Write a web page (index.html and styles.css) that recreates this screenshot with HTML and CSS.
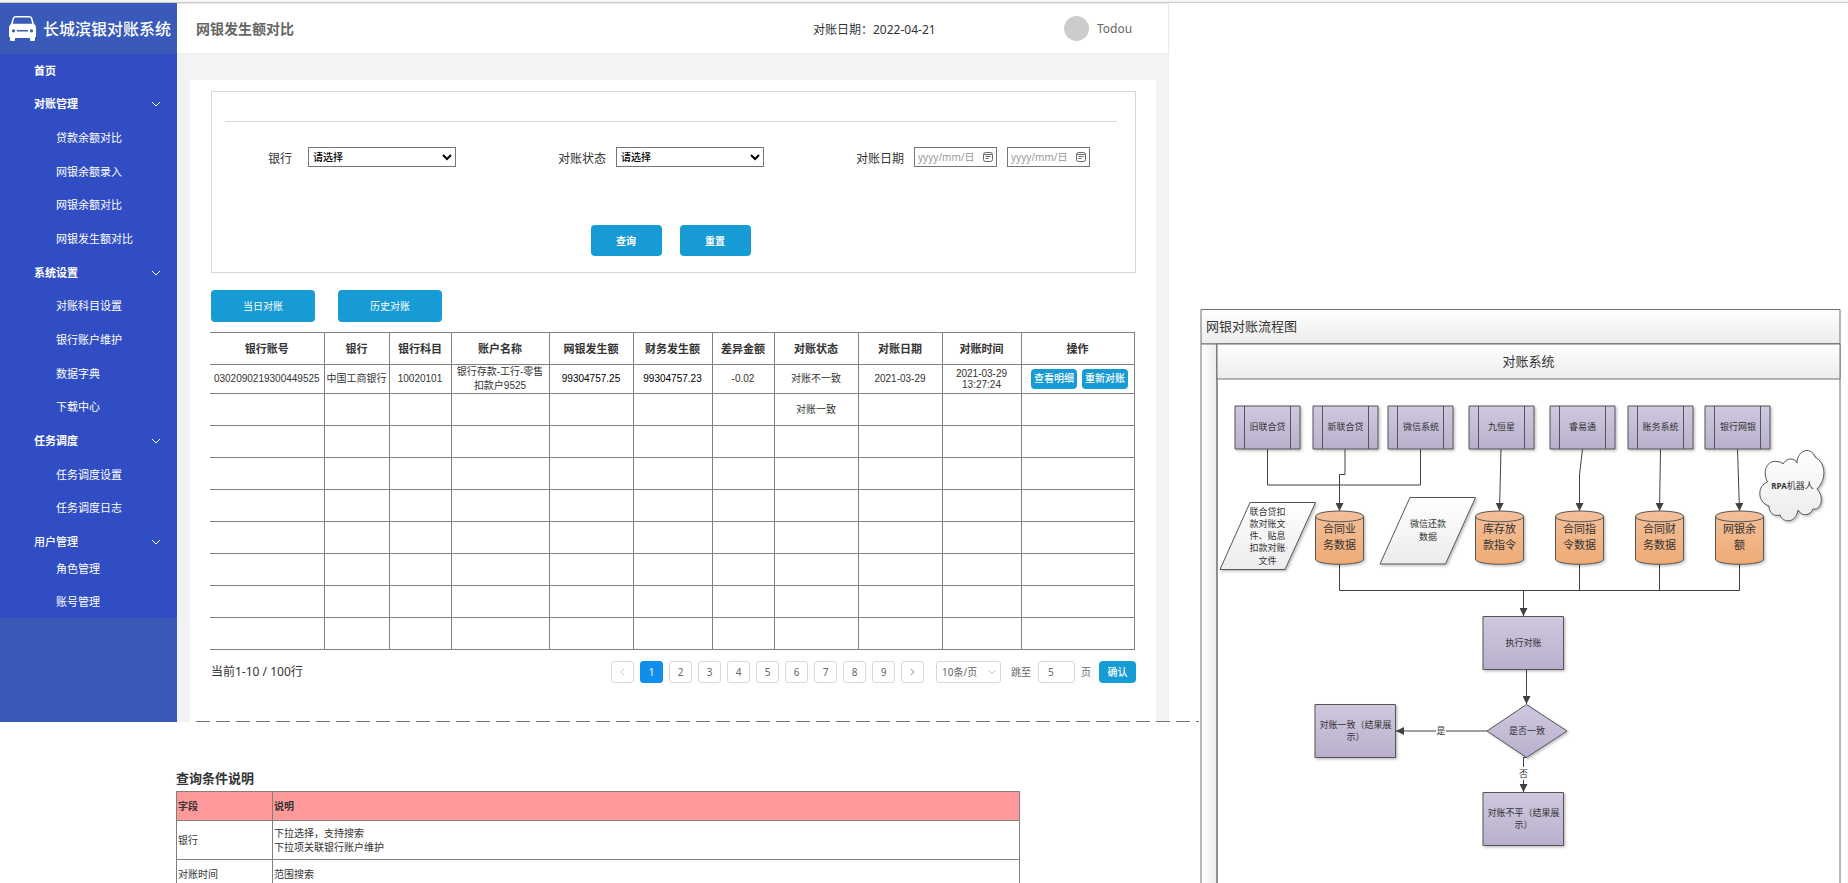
FILE: index.html
```html
<!DOCTYPE html>
<html lang="zh-CN">
<head>
<meta charset="utf-8">
<title>网银发生额对比</title>
<link rel="stylesheet" href="styles.css">
</head>
<body>
<div class="topline"></div>
<div class="page">
  <div class="left">
    <div class="app">
      <aside class="sidebar">
        <div class="brand">
          <svg class="car" viewBox="0 0 27 25" aria-hidden="true">
            <path fill="#fff" fill-rule="evenodd" d="M7 0H20C22 0 23 1 23.6 3L25 8C26.3 9 27 10 27 12V21H26V24Q26 25 25 25H22Q21 25 21 24V22H6V24Q6 25 5 25H2Q1 25 1 24V21H0V12C0 10 .7 9 2 8L3.400 3C4 1 5 0 7 0ZM7 1.500C5.800 1.500 5.200 2.200 4.900 3.200L3.800 7.800H23.200L22.100 3.200C21.800 2.200 21.200 1.500 20 1.500ZM4.500 13.200A1.600 1.600 0 1 0 4.500 16.400A1.600 1.600 0 1 0 4.500 13.200ZM22.500 13.200A1.600 1.600 0 1 0 22.500 16.400A1.600 1.600 0 1 0 22.500 13.200ZM8 14H19V15.500H8Z"/>
          </svg>
          <span>长城滨银对账系统</span>
        </div>
        <nav class="menu">
          <ul class="menu-main">
            <li class="top"><a href="#">首页</a></li>
            <li class="top"><a href="#">对账管理</a><svg class="chev" viewBox="0 0 10 6"><path d="M1 1l4 4 4-4"/></svg></li>
            <li><a href="#">贷款余额对比</a></li>
            <li><a href="#">网银余额录入</a></li>
            <li><a href="#">网银余额对比</a></li>
            <li><a href="#">网银发生额对比</a></li>
            <li class="top"><a href="#">系统设置</a><svg class="chev" viewBox="0 0 10 6"><path d="M1 1l4 4 4-4"/></svg></li>
            <li><a href="#">对账科目设置</a></li>
            <li><a href="#">银行账户维护</a></li>
            <li><a href="#">数据字典</a></li>
            <li><a href="#">下载中心</a></li>
            <li class="top"><a href="#">任务调度</a><svg class="chev" viewBox="0 0 10 6"><path d="M1 1l4 4 4-4"/></svg></li>
            <li><a href="#">任务调度设置</a></li>
            <li><a href="#">任务调度日志</a></li>
            <li class="top medium"><a href="#">用户管理</a><svg class="chev" viewBox="0 0 10 6"><path d="M1 1l4 4 4-4"/></svg></li>
          </ul>
          <ul class="menu-user">
            <li><a href="#">角色管理</a></li>
            <li><a href="#">账号管理</a></li>
          </ul>
        </nav>
      </aside>
      <main class="main">
        <header class="header">
          <h1>网银发生额对比</h1>
          <span class="today">对账日期：2022-04-21</span>
          <span class="user"><i class="avatar"></i>Todou</span>
        </header>
        <section class="panel">
          <form class="filter">
            <hr>
            <div class="fields">
              <div class="field wide"><label for="bank">银行</label><select id="bank"><option>请选择</option></select></div>
              <div class="field"><label for="state">对账状态</label><select id="state"><option>请选择</option></select></div>
              <div class="field"><label for="from">对账日期</label>
                <span class="date"><input id="from" type="text" placeholder="yyyy/mm/日"><svg viewBox="0 0 10 10"><rect x=".5" y=".5" width="9" height="9" rx="2"/><path d="M1 2.500h8M2.500 4.500h5M2.500 6.500h3"/></svg></span>
                <span class="date"><input aria-label="结束日期" type="text" placeholder="yyyy/mm/日"><svg viewBox="0 0 10 10"><rect x=".5" y=".5" width="9" height="9" rx="2"/><path d="M1 2.500h8M2.500 4.500h5M2.500 6.500h3"/></svg></span>
              </div>
            </div>
            <div class="submit">
              <button class="btn heavy" type="button">查询</button>
              <button class="btn heavy" type="button">重置</button>
            </div>
          </form>
          <div class="modes">
            <button class="btn" type="button">当日对账</button>
            <button class="btn" type="button">历史对账</button>
          </div>
          <div class="grid-wrap">
          <table class="grid">
            <colgroup><col class="c114"><col class="c65"><col class="c62"><col class="c98"><col class="c84"><col class="c79"><col class="c62"><col class="c84"><col class="c84"><col class="c79"><col class="c113"></colgroup>
            <thead><tr><th>银行账号</th><th>银行</th><th>银行科目</th><th>账户名称</th><th>网银发生额</th><th>财务发生额</th><th>差异金额</th><th>对账状态</th><th>对账日期</th><th>对账时间</th><th>操作</th></tr></thead>
            <tbody>
              <tr class="first"><td>0302090219300449525</td><td>中国工商银行</td><td>10020101</td><td>银行存款-工行-零售<br>扣款户9525</td><td class="dark">99304757.25</td><td class="dark">99304757.23</td><td>-0.02</td><td>对账不一致</td><td>2021-03-29</td><td class="time">2021-03-29<br>13:27:24</td><td><div class="ops"><button type="button">查看明细</button><button type="button">重新对账</button></div></td></tr>
              <tr><td></td><td></td><td></td><td></td><td></td><td></td><td></td><td>对账一致</td><td></td><td></td><td></td></tr>
              <tr><td></td><td></td><td></td><td></td><td></td><td></td><td></td><td></td><td></td><td></td><td></td></tr>
              <tr><td></td><td></td><td></td><td></td><td></td><td></td><td></td><td></td><td></td><td></td><td></td></tr>
              <tr><td></td><td></td><td></td><td></td><td></td><td></td><td></td><td></td><td></td><td></td><td></td></tr>
              <tr><td></td><td></td><td></td><td></td><td></td><td></td><td></td><td></td><td></td><td></td><td></td></tr>
              <tr><td></td><td></td><td></td><td></td><td></td><td></td><td></td><td></td><td></td><td></td><td></td></tr>
              <tr><td></td><td></td><td></td><td></td><td></td><td></td><td></td><td></td><td></td><td></td><td></td></tr>
              <tr><td></td><td></td><td></td><td></td><td></td><td></td><td></td><td></td><td></td><td></td><td></td></tr>
            </tbody>
          </table>
          </div>
          <div class="pager">
            <span class="count">当前1-10 / 100行</span>
            <div class="pages">
              <button type="button" aria-label="上一页" disabled><svg viewBox="0 0 5 8"><path d="M4 1L1 4l3 3"/></svg></button>
              <button type="button" class="on">1</button>
              <button type="button">2</button>
              <button type="button">3</button>
              <button type="button">4</button>
              <button type="button">5</button>
              <button type="button">6</button>
              <button type="button">7</button>
              <button type="button">8</button>
              <button type="button">9</button>
              <button type="button" aria-label="下一页"><svg viewBox="0 0 5 8"><path d="M1 1l3 3-3 3"/></svg></button>
            </div>
            <span class="size"><select aria-label="每页条数"><option>10条/页</option></select><svg viewBox="0 0 10 6"><path d="M1 1l4 4 4-4"/></svg></span>
            <label for="jump">跳至</label>
            <input id="jump" type="text" value="5">
            <span class="unit">页</span>
            <button class="btn confirm" type="button">确认</button>
          </div>
        </section>
      </main>
      <svg class="fold" height="1" aria-hidden="true"><line x1="0" y1=".5" x2="100%" y2=".5"/></svg>
    </div>
    <section class="notes">
      <h2>查询条件说明</h2>
      <table>
        <thead><tr><th class="name">字段</th><th>说明</th></tr></thead>
        <tbody>
          <tr class="tall"><td>银行</td><td>下拉选择，支持搜索<br>下拉项关联银行账户维护</td></tr>
          <tr><td>对账时间</td><td>范围搜索</td></tr>
        </tbody>
      </table>
    </section>
  </div>
  <div class="right">
    <svg class="flow" viewBox="0 0 658 583" role="img" aria-label="网银对账流程图">
      <defs>
        <linearGradient id="gh" x2="0" y2="1"><stop offset="0" stop-color="#fff"/><stop offset="1" stop-color="#ececec"/></linearGradient>
        <linearGradient id="gv"><stop offset="0" stop-color="#fff"/><stop offset="1" stop-color="#ececec"/></linearGradient>
        <linearGradient id="gp" x2="0" y2="1"><stop offset="0" stop-color="#cfc8de"/><stop offset="1" stop-color="#bab0cd"/></linearGradient>
        <linearGradient id="go" x2="0" y2="1"><stop offset="0" stop-color="#f3c09a"/><stop offset="1" stop-color="#efab75"/></linearGradient>
        <filter id="sh" x="-10%" y="-10%" width="130%" height="130%"><feDropShadow dx="1.500" dy="1.500" stdDeviation="1" flood-opacity=".25"/></filter>
        <marker id="ar" markerUnits="userSpaceOnUse" markerWidth="8" markerHeight="8" refX="8" refY="4" orient="auto"><path d="M0 0L8 4L0 8Z" fill="#404040"/></marker>
        <g id="proc"><path class="purple" filter="url(#sh)" d="M0 0H65V43H0Z"/><path class="edge" d="M9.500 0V43M55.500 0V43"/></g>
        <g id="cyl"><path class="orange" filter="url(#sh)" d="M-24 5.500C-24 -1.800 24 -1.800 24 5.500V48C24 55 -24 55 -24 48Z"/><path class="edge" d="M-24 5.500C-24 12.500 24 12.500 24 5.500"/></g>
      </defs>
      <path class="frame" fill="url(#gh)" d="M11 10.500H650V45H11Z"/>
      <path class="frame" fill="url(#gv)" d="M11 45H27V600H11Z"/>
      <path class="frame" fill="none" d="M27 45H650V600H27Z"/>
      <path class="frame" fill="url(#gh)" d="M27 45H650V80H27Z"/>
      <text class="t13 start" x="16" y="32">网银对账流程图</text>
      <text class="t13" x="338.500" y="67">对账系统</text>

      <path class="link" d="M77.500 150V186H230.500V150"/>
      <g class="link arrow">
        <path d="M155 150V175.500H149.500V212"/><path d="M311 150L309.500 212"/><path d="M392.500 150L389.500 176V212"/><path d="M470.500 150L469.500 212"/><path d="M547.500 150L549.500 212"/>
        <path d="M333.500 291.500V317"/><path d="M336.500 371V405"/><path d="M297 432H206"/><path d="M336.500 458.500H333.500V493"/>
      </g>
      <path class="link" d="M149.500 265V291.500H549.500V265M389.500 265V291.500M469.500 265V291.500"/>

      <use href="#proc" x="45" y="107"/><use href="#proc" x="123" y="107"/><use href="#proc" x="198" y="107"/><use href="#proc" x="279" y="107"/><use href="#proc" x="360" y="107"/><use href="#proc" x="438" y="107"/><use href="#proc" x="515" y="107"/>
      <g class="t9"><text x="77.500" y="131">旧联合贷</text><text x="155.500" y="131">新联合贷</text><text x="231" y="131">微信系统</text><text x="311.500" y="131">九恒星</text><text x="392.500" y="131">睿易通</text><text x="470.500" y="131">账务系统</text><text x="548" y="131">银行网银</text></g>

      <path class="paper" filter="url(#sh)" d="M60 203.500H125.500L95 270.500H30Z"/>
      <path class="paper" filter="url(#sh)" d="M220 198.500H285.500L255.500 265H190Z"/>
      <g class="t9"><text x="77.500" y="216">联合贷扣</text><text x="77.500" y="228">款对账文</text><text x="77.500" y="240">件、贴息</text><text x="77.500" y="252">扣款对账</text><text x="77.500" y="265">文件</text><text x="238" y="228">微信还款</text><text x="238" y="241">数据</text></g>

      <use href="#cyl" x="149.500" y="212"/><use href="#cyl" x="309.500" y="212"/><use href="#cyl" x="389.500" y="212"/><use href="#cyl" x="469.500" y="212"/><use href="#cyl" x="549.500" y="212"/>
      <g class="t11"><text x="149.500" y="234">合同业</text><text x="149.500" y="250">务数据</text><text x="309.500" y="234">库存放</text><text x="309.500" y="250">款指令</text><text x="389.500" y="234">合同指</text><text x="389.500" y="250">令数据</text><text x="469.500" y="234">合同财</text><text x="469.500" y="250">务数据</text><text x="549.500" y="234">网银余</text><text x="549.500" y="250">额</text></g>

      <path class="paper" filter="url(#sh)" d="M577.500 183C572 172 577 161 587 162.500Q591 162.500 593 165C597 158 605 159 607 164C607 152 620 146 625 158C636 164 637 180 627 190C635 198 631 212 623 210C620 217 612 218 608 211C606 225 592 224 590 216C583 218 579 213 579 207C567 203 567 187 577.500 183Z"/>
      <text class="t9" x="602.500" y="190"><tspan class="rpa">RPA</tspan>机器人</text>

      <path class="purple" filter="url(#sh)" d="M293 317.500H373.500V370.500H293Z"/>
      <path class="purple" filter="url(#sh)" d="M125 405.500H205.500V458.500H125Z"/>
      <path class="purple" filter="url(#sh)" d="M293 493.500H373.500V546.500H293Z"/>
      <path class="purple" filter="url(#sh)" d="M336.500 405.500L377 432L336.500 458.500L297 432Z"/>
      <path fill="#fff" d="M246 426H256V438H246ZM329 468H338V481H329Z"/>
      <g class="t9"><text x="333.500" y="347">执行对账</text><text x="337" y="435">是否一致</text><text x="251" y="435">是</text><text x="333.500" y="478">否</text><text x="165.500" y="429">对账一致（结果展</text><text x="165.500" y="441">示）</text><text x="333.500" y="517">对账不平（结果展</text><text x="333.500" y="529">示）</text></g>
    </svg>
  </div>
</div>
</body>
</html>
```
FILE: styles.css
```css
* { box-sizing: border-box; }
body {
  margin: 0;
  height: 100vh;
  overflow: hidden;
  display: flex;
  flex-direction: column;
  background: #fff;
  color: #333;
  font: 11px/14px "Noto Sans", "Noto Sans CJK SC", sans-serif;
}
button, input, select { font: inherit; margin: 0; }
ul { list-style: none; margin: 0; padding: 0; }
svg { display: block; fill: none; }

.topline { flex: none; height: 3px; background: #f5f5f5; border-bottom: 1px solid #ccc; }
.page { flex: 1; min-height: 0; display: grid; grid-template-columns: 1169fr 679fr; }
.left { min-width: 0; }
.app { position: relative; display: grid; grid-template-columns: 177px minmax(0, 1fr); }

.sidebar { background: #395ab8; color: #fff; }
.brand { display: flex; align-items: center; gap: 7px; height: 51px; padding-left: 9px; font-size: 16px; font-weight: 500; white-space: nowrap; }
.car { flex: none; width: 27px; height: 25px; }
.menu { background: #304dc4; }
.menu a { color: #fff; text-decoration: none; }
.menu-main { display: grid; grid-auto-rows: 1fr; height: 505px; }
.menu li { display: flex; align-items: center; justify-content: space-between; padding: 0 16px 0 56px; }
.menu .top { padding-left: 34px; font-weight: bold; }
.menu .medium { font-weight: 500; }
.menu-user { margin-top: -7px; }
.menu-user li { height: 33px; }
.chev { width: 10px; height: 6px; stroke: #fff; }

.main { display: flex; flex-direction: column; background: #f3f3f3; }
.header { display: grid; grid-template-columns: 617fr 251fr 104fr; align-items: center; height: 51px; padding-left: 19px; border: 1px solid #e9e9e9; border-left: 0; background: #fff; }
.header h1 { margin: 0; font-size: 14px; font-weight: bold; color: #666; }
.today { padding-top: 3px; font-size: 12px; }
.user { display: flex; align-items: center; gap: 8px; font-size: 12px; color: #666; }
.avatar { width: 25px; height: 25px; border-radius: 50%; background: #ccc; }
.panel { flex: 1; margin: 26px 13px 0; padding: 11px 20px 39px 21px; background: #fff; }

.filter { border: 1px solid #d7d7d7; padding-bottom: 16px; }
.filter hr { height: 1px; margin: 29px 18px 0 13px; border: 0; background: #d7d7d7; }
.fields { display: grid; grid-template-columns: 290fr 298fr 234fr; margin: 25px 45px 0 56px; font-size: 12px; }
.field { display: flex; align-items: center; gap: 10px; white-space: nowrap; }
.field.wide { gap: 16px; }
.field label { padding-top: 3px; }
.field select { width: 148px; height: 20px; border: 1px solid #767676; border-radius: 0; background: #fff; color: #000; font-size: 10px; font-weight: 500; }
.date { display: flex; align-items: center; width: 83px; height: 20px; padding: 0 3px; border: 1px solid #767676; }
.date input { flex: 1; min-width: 0; border: 0; padding: 0; outline: 0; font-size: 10px; }
.date input::placeholder { color: #999; }
.date svg { width: 10px; height: 10px; stroke: #666; }
.submit { display: flex; justify-content: center; gap: 18px; margin: 58px 6px 0 0; }
.btn { border: 0; border-radius: 4px; padding: 0; background: #169bd5; color: #fff; font-size: 10px; }
.submit .btn { width: 71px; height: 31px; }
.heavy { font-weight: bold; }
.modes { display: flex; gap: 23px; margin: 17px 0 10px; }
.modes .btn { width: 104px; height: 32px; }

.grid-wrap { margin: 0 2px 0 -1px; }
.grid { width: 100%; table-layout: fixed; border-collapse: collapse; text-align: center; font: 10px/14px "Liberation Sans", "Noto Sans CJK SC", sans-serif; }
.grid th, .grid td { height: 32px; padding: 0; border: 1px solid #7f7f7f; white-space: nowrap; }
.grid th:first-child, .grid td:first-child { border-left: 0; }
.grid th { font-size: 11px; }
.grid .first td { height: 29px; }
.grid .dark { color: #000; }
.grid .time { line-height: 11px; }
.c114 { width: 114px; }
.c113 { width: 113px; }
.c98 { width: 98px; }
.c84 { width: 84px; }
.c79 { width: 79px; }
.c65 { width: 65px; }
.c62 { width: 62px; }
.ops { display: flex; justify-content: center; gap: 5px; padding-left: 4px; }
.ops button { width: 46px; height: 20px; padding: 0; border: 0; border-radius: 4px; background: #169bd5; color: #fff; font-weight: 500; }

.pager { display: flex; align-items: center; margin-top: 11px; color: #666; font-size: 10px; }
.count { flex: 1; color: #333; font-size: 12px; }
.pages { display: flex; gap: 6px; }
.pages button { display: flex; align-items: center; justify-content: center; width: 23px; height: 22px; padding: 0; border: 1px solid #d9d9d9; border-radius: 3px; background: #fff; color: #666; }
.pages .on { border-color: #108ee9; background: #108ee9; color: #fff; }
.pages svg { width: 5px; height: 8px; stroke: #888; }
.pages button:disabled svg { stroke: #ccc; }
.size { position: relative; margin: 0 10px 0 12px; }
.size select { display: block; appearance: none; width: 65px; height: 22px; padding: 0 5px; border: 1px solid #d9d9d9; border-radius: 3px; background: #fff; color: #666; }
.size svg { position: absolute; right: 5px; top: 8px; width: 8px; height: 6px; stroke: #aaa; }
.pager input { width: 37px; height: 22px; margin: 0 6px 0 7px; padding: 0 9px; border: 1px solid #d9d9d9; border-radius: 3px; color: #666; }
.confirm { width: 37px; height: 22px; margin-left: 8px; font-weight: 500; }

.fold { position: absolute; left: 196px; bottom: 0; width: calc(100% - 166px); }
.fold line { stroke: #777; stroke-dasharray: 14 6; }

.notes { margin: 48px 149px 0 176px; }
.notes h2 { margin: 0 0 5px; font-size: 13px; line-height: 16px; }
.notes table { width: 100%; border-collapse: collapse; text-align: left; font-size: 10px; }
.notes th, .notes td { height: 29px; padding: 0 1px; border: 1px solid #7f7f7f; }
.notes th { background: #f99; }
.notes .name { width: 96px; }
.notes .tall td { height: 39px; }

.right { padding: 296px 0 0 21px; min-width: 0; }
.flow { width: 100%; overflow: visible; font-family: "Liberation Serif", "Noto Sans CJK SC", serif; }
.flow text { fill: #333; stroke: none; text-anchor: middle; }
.flow .start { text-anchor: start; }
.t13 { font-size: 13px; }
.t11 { font-size: 11px; }
.t9 { font-size: 9px; }
.rpa { font: bold 8px "Noto Sans", sans-serif; }
.frame { stroke: #6e6e6e; }
.purple { fill: url(#gp); stroke: #555; }
.orange { fill: url(#go); stroke: #555; }
.paper { fill: url(#gh); stroke: #555; }
.edge { stroke: #555; }
.link { stroke: #404040; }
.arrow path { marker-end: url(#ar); }
```
